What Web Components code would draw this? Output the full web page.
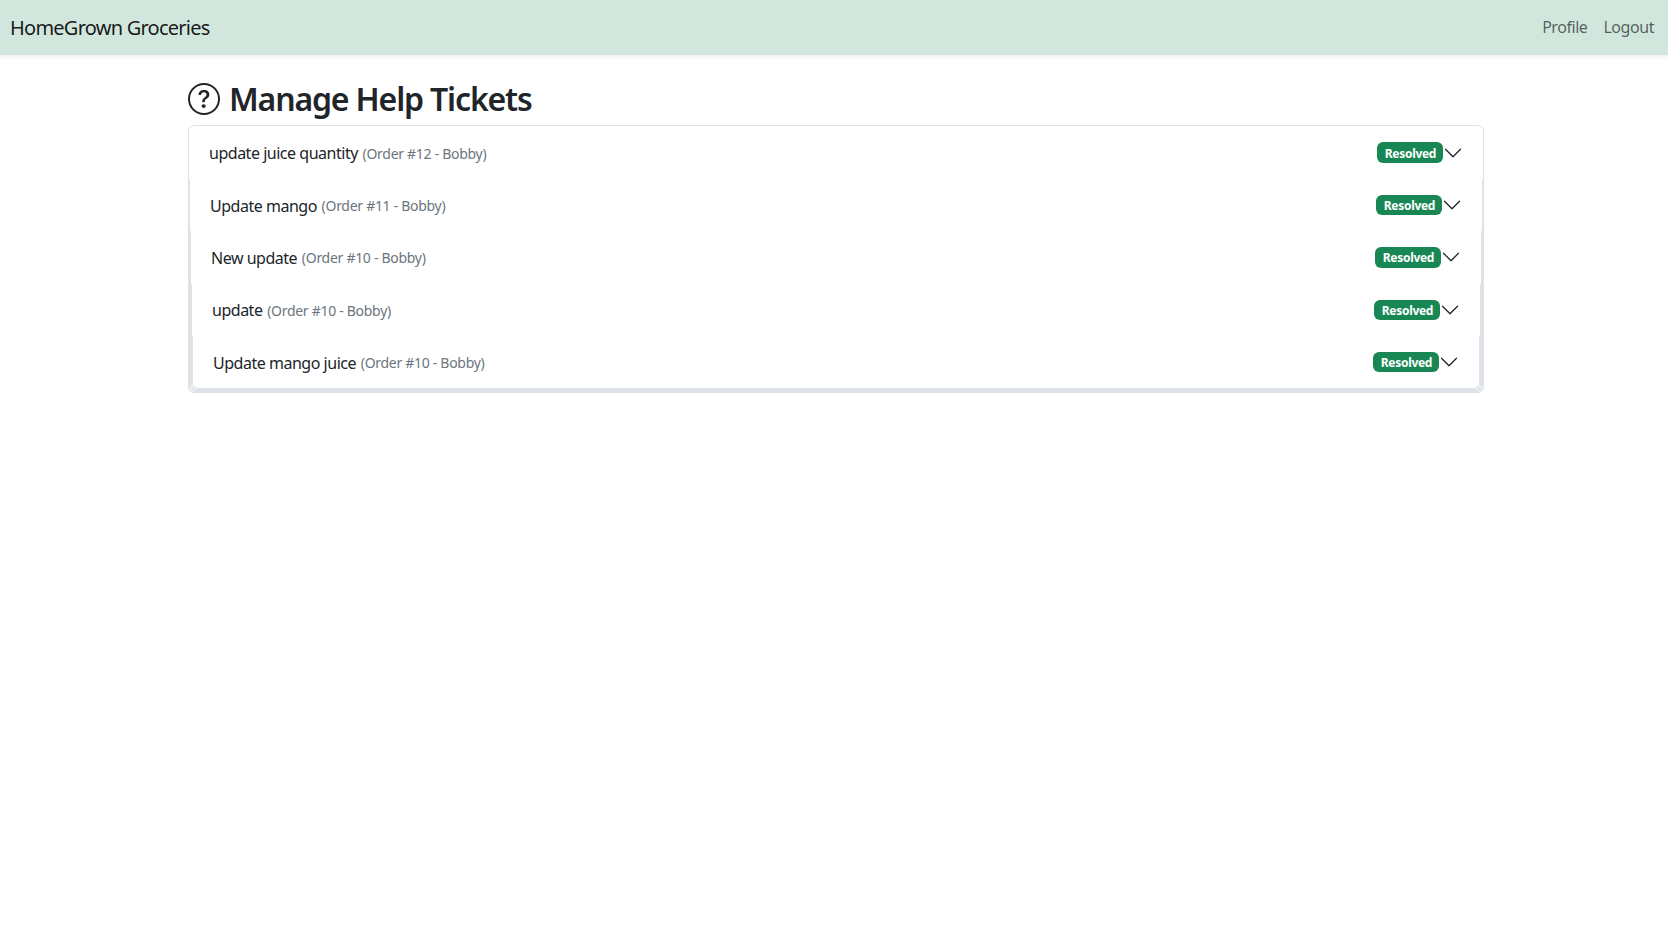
<!DOCTYPE html>
<html lang="en"><head><meta charset="utf-8"><title>Manage Help Tickets</title>
<style>
html,body{margin:0;padding:0;background:#fff}
body{font-family:"Noto Sans","Open Sans",sans-serif;color:#212529;font-size:16px}
</style></head><body>
<app-navbar>
  <span slot="brand">HomeGrown Groceries</span>
  <nav-link>Profile</nav-link>
  <nav-link>Logout</nav-link>
</app-navbar>
<page-main>
  <page-heading>Manage Help Tickets</page-heading>
  <ticket-item>
    <span slot="title">update juice quantity</span><span slot="meta">(Order #12 - Bobby)</span>
    <ticket-item nested>
      <span slot="title">Update mango</span><span slot="meta">(Order #11 - Bobby)</span>
      <ticket-item nested>
        <span slot="title">New update</span><span slot="meta">(Order #10 - Bobby)</span>
        <ticket-item nested>
          <span slot="title">update</span><span slot="meta">(Order #10 - Bobby)</span>
          <ticket-item nested>
            <span slot="title">Update mango juice</span><span slot="meta">(Order #10 - Bobby)</span>
          </ticket-item>
        </ticket-item>
      </ticket-item>
    </ticket-item>
  </ticket-item>
</page-main>
<script>
function def(name, html){
  customElements.define(name, class extends HTMLElement{
    constructor(){super();this.attachShadow({mode:'open'}).innerHTML=html;}
  });
}
def('app-navbar',`<style>
:host{display:flex;align-items:center;justify-content:space-between;height:55px;box-sizing:border-box;padding:0 6px 0 10px;background:#d1e7dd;box-shadow:0 2px 4px rgba(0,0,0,.075);position:relative}
.brand{font-size:20px;color:rgba(0,0,0,.9);letter-spacing:-.76px;display:block;margin-top:-1px}
.links{display:flex}
</style><div class="brand"><slot name="brand"></slot></div><div class="links"><slot></slot></div>`);
def('nav-link',`<style>
:host{display:block;padding:0 8px;font-size:16px;color:rgba(0,0,0,.6);letter-spacing:-.45px;margin-top:-1px}
</style><slot></slot>`);
def('page-main',`<style>
:host{display:block;margin-left:188px;width:1296px;padding-top:20px}
</style><slot></slot>`);
def('page-heading',`<style>
:host{display:flex;align-items:center;gap:9px;height:50.4px;font-size:32px;font-weight:600;color:#212529;letter-spacing:-1.16px}
svg{width:32px;height:32px;flex:none;fill:currentColor;margin-bottom:2px}
span{margin-bottom:4px}
</style><svg viewBox="0 0 16 16" aria-hidden="true"><path d="M8 15A7 7 0 1 1 8 1a7 7 0 0 1 0 14zm0 1A8 8 0 1 0 8 0a8 8 0 0 0 0 16z"/><path d="M5.255 5.786a.237.237 0 0 0 .241.247h.825c.138 0 .248-.113.266-.25.09-.656.54-1.134 1.342-1.134.686 0 1.314.343 1.314 1.168 0 .635-.374.927-.965 1.371-.673.489-1.206 1.06-1.168 1.987l.003.217a.25.25 0 0 0 .25.246h.811a.25.25 0 0 0 .25-.25v-.105c0-.718.273-.927 1.01-1.486.609-.463 1.244-.977 1.244-2.056 0-1.511-1.276-2.241-2.673-2.241-1.267 0-2.655.59-2.75 2.286zm1.557 5.763c0 .533.425.927 1.01.927.609 0 1.028-.394 1.028-.927 0-.552-.42-.94-1.029-.94-.584 0-1.009.388-1.009.94z"/></svg><span><slot></slot></span>`);
def('status-badge',`<style>
:host{display:block;box-sizing:border-box;padding:5.2px 7.8px 3.2px;height:20.4px;border-radius:6px;background:#198754;color:#fff;font-size:12px;line-height:12px;font-weight:700;letter-spacing:-.3px;white-space:nowrap;width:66px;text-align:center}
</style><slot></slot>`);
def('ticket-item',`<style>
:host{display:block;background:#fff;border:1px solid #dee2e6;border-radius:6px;overflow:hidden}
:host([nested]){border-top:0;border-top-left-radius:0;border-top-right-radius:0}
.row{display:flex;align-items:center;height:52.4px;box-sizing:border-box;padding:0 20px;font-size:16px;letter-spacing:-.48px;color:#212529}
.txt{padding-top:1.2px}
.meta{font-size:14px;color:#6c757d;margin-left:4.7px;letter-spacing:-.29px}
.end{margin-left:auto}
svg{width:20px;height:20px;flex:none;fill:#212529}
</style><div class="row"><span class="txt"><slot name="title"></slot></span><span class="txt meta"><slot name="meta"></slot></span><status-badge class="end">Resolved</status-badge><svg viewBox="0 0 16 16" aria-hidden="true"><path fill-rule="evenodd" d="M1.646 4.646a.5.5 0 0 1 .708 0L8 10.293l5.646-5.647a.5.5 0 0 1 .708.708l-6 6a.5.5 0 0 1-.708 0l-6-6a.5.5 0 0 1 0-.708z"/></svg></div><slot></slot>`);
</script>
</body></html>
